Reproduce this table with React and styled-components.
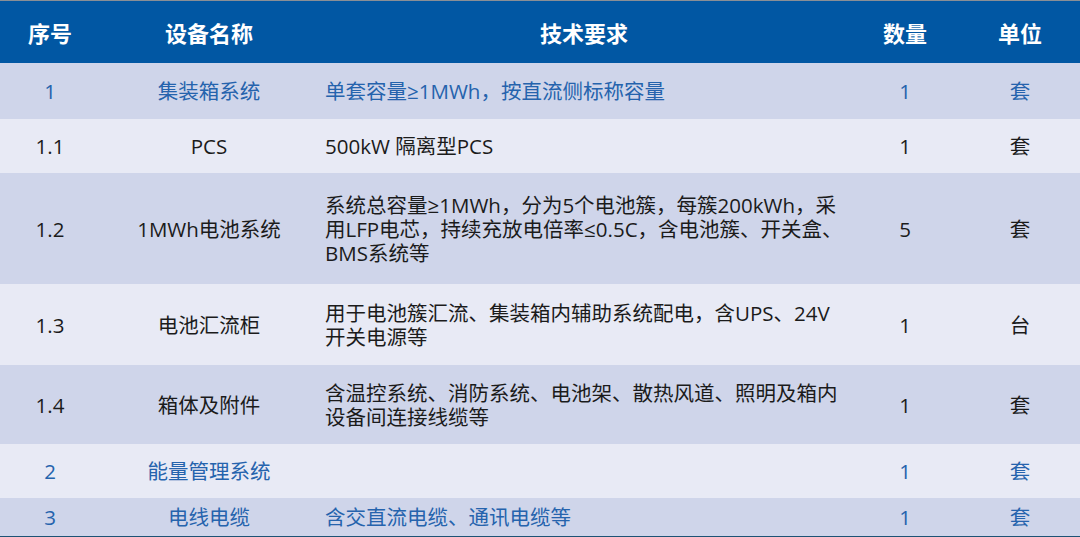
import React from 'react'
import styled, { createGlobalStyle, css } from 'styled-components'

const GlobalStyle = createGlobalStyle`
  html, body {
    margin: 0;
    padding: 0;
    background: #ffffff;
  }
  body {
    font-family: 'Open Sans', 'Noto Sans CJK SC', sans-serif;
  }
`

const columns = [
  { key: 'no', title: '序号' },
  { key: 'name', title: '设备名称' },
  { key: 'spec', title: '技术要求' },
  { key: 'qty', title: '数量' },
  { key: 'unit', title: '单位' }
]

const rows = [
  { no: '1', name: '集装箱系统', spec: ['单套容量≥1MWh，按直流侧标称容量'], qty: '1', unit: '套', height: 56, tint: true, accent: true },
  { no: '1.1', name: 'PCS', spec: ['500kW 隔离型PCS'], qty: '1', unit: '套', height: 54 },
  {
    no: '1.2',
    name: '1MWh电池系统',
    spec: ['系统总容量≥1MWh，分为5个电池簇，每簇200kWh，采', '用LFP电芯，持续充放电倍率≤0.5C，含电池簇、开关盒、', 'BMS系统等'],
    qty: '5',
    unit: '套',
    height: 111,
    tint: true
  },
  { no: '1.3', name: '电池汇流柜', spec: ['用于电池簇汇流、集装箱内辅助系统配电，含UPS、24V', '开关电源等'], qty: '1', unit: '台', height: 81 },
  { no: '1.4', name: '箱体及附件', spec: ['含温控系统、消防系统、电池架、散热风道、照明及箱内', '设备间连接线缆等'], qty: '1', unit: '套', height: 79, tint: true },
  { no: '2', name: '能量管理系统', spec: [], qty: '1', unit: '套', height: 54, accent: true },
  { no: '3', name: '电线电缆', spec: ['含交直流电缆、通讯电缆等'], qty: '1', unit: '套', height: 38, tint: true, accent: true }
]

export default function App() {
  return (
    <>
      <GlobalStyle />
      <Sheet>
        <Header>
          {columns.map(col => (
            <HeadCell key={col.key}>{col.title}</HeadCell>
          ))}
        </Header>
        {rows.map(row => (
          <Row key={row.no} $height={row.height} $tint={row.tint} $accent={row.accent}>
            <Cell>{row.no}</Cell>
            <Cell>{row.name}</Cell>
            <SpecCell>
              {row.spec.map((line, i) => (
                <span key={i}>{line}</span>
              ))}
            </SpecCell>
            <Cell>{row.qty}</Cell>
            <Cell>{row.unit}</Cell>
          </Row>
        ))}
      </Sheet>
    </>
  )
}

const grid = css`
  display: grid;
  grid-template-columns: 100px 218px 532px 110px 120px;
`

const Sheet = styled.div`
  width: 1080px;
  height: 537px;
  display: flex;
  flex-direction: column;
  border-top: 1px solid #8a8f96;
  border-bottom: 1px solid #1d5375;
  box-sizing: border-box;
  overflow: hidden;
`

const Header = styled.div`
  ${grid};
  height: 62px;
  background-color: #0157a3;
  color: #ffffff;
  font-family: 'Noto Sans CJK SC', sans-serif;
  font-size: 22px;
  font-weight: 700;
`

const HeadCell = styled.div`
  display: flex;
  align-items: center;
  justify-content: center;
  padding-bottom: 1px;
`

const Row = styled.div`
  ${grid};
  height: ${({ $height }) => $height}px;
  background-color: ${({ $tint }) => ($tint ? '#cfd5ea' : '#e8eaf5')};
  color: ${({ $accent }) => ($accent ? '#2563ad' : '#1b1b1b')};
  font-family: 'Open Sans', 'Noto Sans CJK SC', sans-serif;
  font-size: 20.5px;
  line-height: 24px;
`

const Cell = styled.div`
  display: flex;
  align-items: center;
  justify-content: center;
`

const SpecCell = styled.div`
  display: flex;
  flex-direction: column;
  justify-content: center;
  padding-left: 7px;
  white-space: nowrap;
`
